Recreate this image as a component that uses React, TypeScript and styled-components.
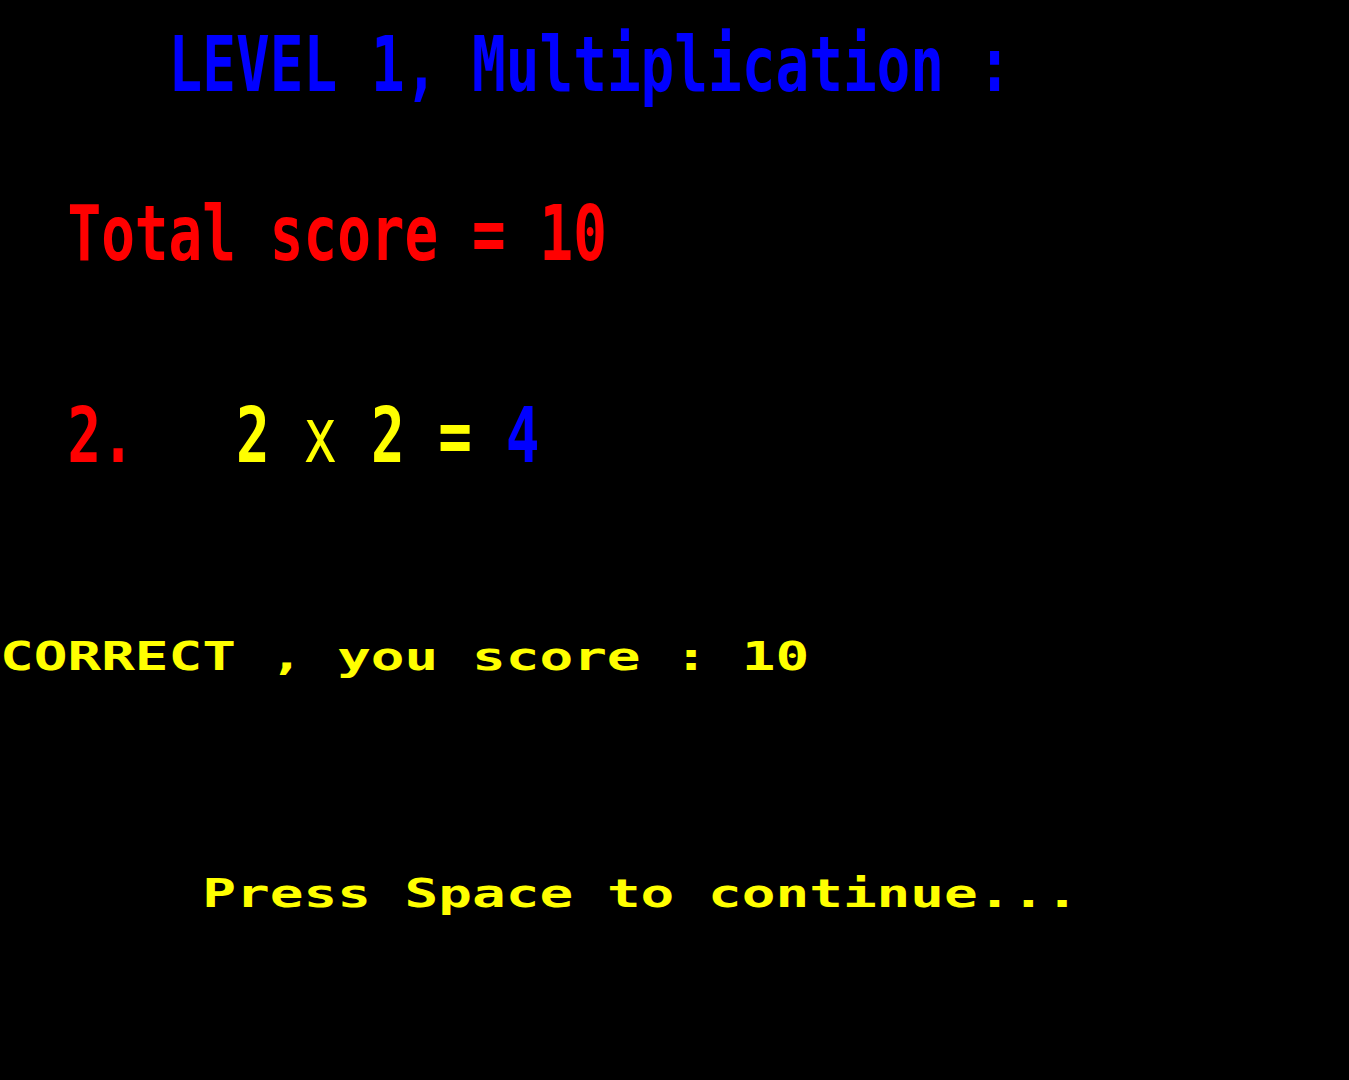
import styled, { createGlobalStyle } from "styled-components";

const COLS = 40;
const ROWS = 32;
const FONT = 56; // DejaVu Sans Mono advance 0.602em -> ~33.7px per cell
const CAP_TOP = 0.117 * FONT; // cap top offset inside line box (line-height 1)

const GlobalStyle = createGlobalStyle`
  html, body {
    margin: 0;
    padding: 0;
    background: #000;
  }
  body {
    font-family: "DejaVu Sans Mono", "Liberation Mono", monospace;
    overflow: hidden;
  }
`;

const Screen = styled.div`
  width: 1349px;
  height: 1080px;
  background: #000;
  display: grid;
  grid-template-columns: repeat(${COLS}, ${1349 / COLS}px);
  grid-template-rows: repeat(${ROWS}, ${1080 / ROWS}px);
  overflow: hidden;
`;

const Line = styled.div<{ $row: number; $col: number; $tall?: boolean }>`
  grid-row: ${(p) => p.$row + 1} / span ${(p) => (p.$tall ? 2 : 1)};
  grid-column: ${(p) => p.$col + 1} / -1;
  align-self: start;
  font-family: "DejaVu Sans Mono", "Liberation Mono", monospace;
  font-weight: bold;
  font-size: ${FONT}px;
  line-height: 1;
  white-space: pre;
  transform-origin: 0 0;
  transform: ${(p) => {
    const s = p.$tall ? 1.38 : 0.69;
    return `translateY(${-CAP_TOP * s + 1}px) scaleY(${s})`;
  }};
`;

const Ink = styled.span<{ $c: "blue" | "red" | "yellow"; $thin?: boolean }>`
  color: ${(p) =>
    p.$c === "blue" ? "#0000ff" : p.$c === "red" ? "#ff0000" : "#ffff00"};
  font-weight: ${(p) => (p.$thin ? "normal" : "bold")};
`;

export default function App() {
  return (
    <>
      <GlobalStyle />
      <Screen>
        <Line $row={1} $col={5} $tall>
          <Ink $c="blue">LEVEL 1, Multiplication :</Ink>
        </Line>

        <Line $row={6} $col={2} $tall>
          <Ink $c="red">Total score = 10</Ink>
        </Line>

        <Line $row={12} $col={2} $tall>
          <Ink $c="red">2.   </Ink>
          <Ink $c="yellow">2 </Ink>
          <Ink $c="yellow" $thin>x</Ink>
          <Ink $c="yellow"> 2 = </Ink>
          <Ink $c="blue">4</Ink>
        </Line>

        <Line $row={19} $col={0}>
          <Ink $c="yellow">CORRECT , you score : 10</Ink>
        </Line>

        <Line $row={26} $col={6}>
          <Ink $c="yellow">Press Space to continue...</Ink>
        </Line>
      </Screen>
    </>
  );
}
